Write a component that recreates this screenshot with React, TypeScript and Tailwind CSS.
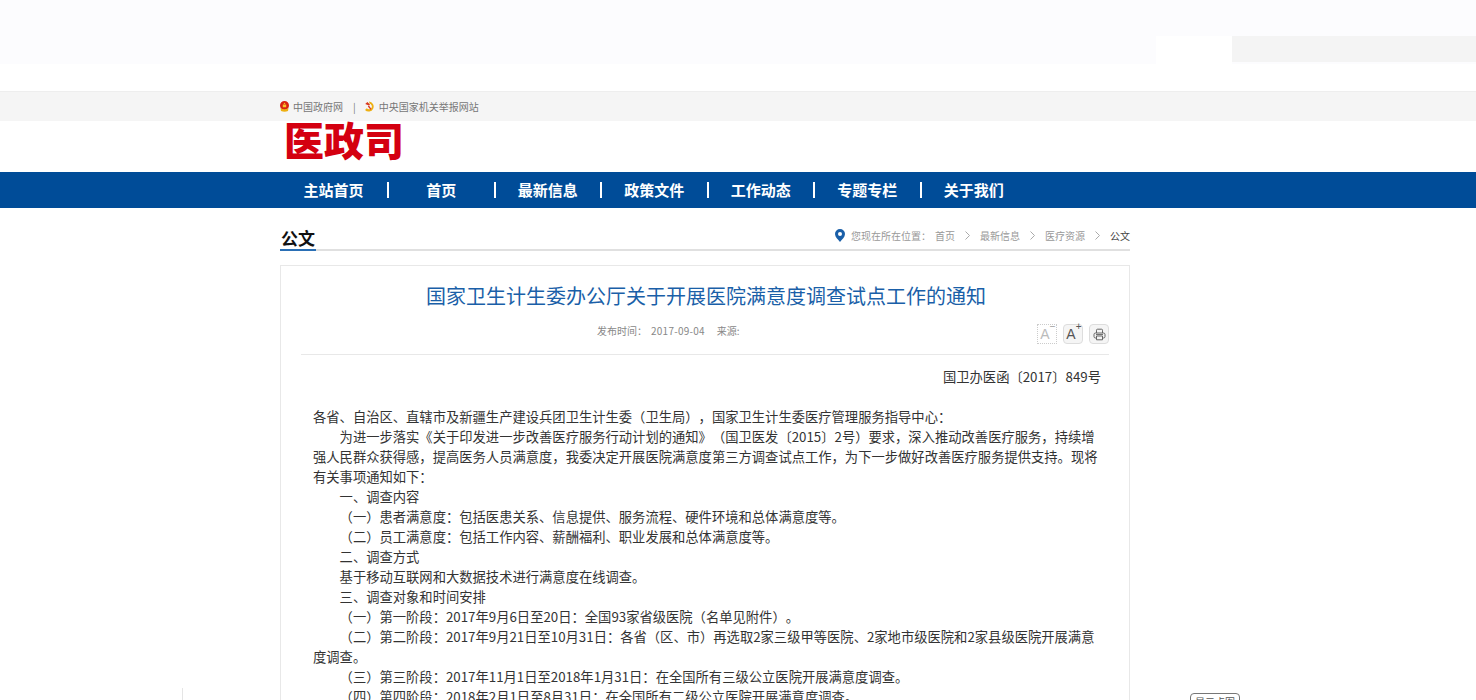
const navItems = ["主站首页", "首页", "最新信息", "政策文件", "工作动态", "专题专栏", "关于我们"];
const crumbs = ["首页", "最新信息", "医疗资源"];

const Emblem = () => (
  <svg width="9" height="11" viewBox="0 0 9 11">
    <path d="M4.5 0 A4.5 4.5 0 0 1 9 4.5 A4.5 4.5 0 0 1 0 4.5 A4.5 4.5 0 0 1 4.5 0 Z" fill="#d9230f" />
    <path d="M0.5 7 Q4.5 9.5 8.5 7 L8 10 Q4.5 11.5 1 10 Z" fill="#eeb012" />
    <path d="M4.5 1.4 L5.4 3 L3.6 3 Z M2.8 3.6 H6.2 V6.2 H2.8 Z" fill="#f6c62a" />
  </svg>
);

const PartyBadge = () => (
  <svg width="11" height="11" viewBox="0 0 11 11">
    <path d="M5 0.6 A5 5 0 1 1 1 9 L2.8 7.2 A2.8 2.8 0 1 0 5.6 2.8 Z" fill="#eeb012" />
    <path d="M1.2 3 L3.4 1 L6 3.6 L5 4.6 Z M5 4.6 L7.4 8 L6.6 8.8 L3.8 5.6 Z" fill="#d9381e" />
  </svg>
);

const PrintIcon = () => (
  <svg width="13" height="13" viewBox="0 0 13 13" fill="none" stroke="#666" strokeWidth="1">
    <path d="M3.5 5 V2.2 Q3.5 1.2 4.5 1.2 H8.5 Q9.5 1.2 9.5 2.2 V5" />
    <rect x="1" y="5" width="11" height="5" rx="1.5" />
    <path d="M3.5 8 H9.5 V11.8 H3.5 Z" fill="#f5f5f5" />
    <path d="M3 6.6 H10" />
  </svg>
);

const PinIcon = () => (
  <svg width="10" height="13" viewBox="0 0 10 13">
    <path d="M5 0 A5 5 0 0 1 10 5 C10 8 7 10.5 5 13 C3 10.5 0 8 0 5 A5 5 0 0 1 5 0 Z" fill="#1a5fa8" />
    <circle cx="5" cy="5" r="2" fill="#fff" />
  </svg>
);

function ChevronIcon() {
  return (
    <svg width="13" height="13" viewBox="0 0 13 13" fill="none" stroke="#aaa" strokeWidth="1">
      <path d="M4.5 2.5 L8.5 6.5 L4.5 10.5" />
    </svg>
  );
}

export default function App() {
  return (
    <div className="relative h-screen overflow-hidden bg-white font-['Noto_Sans_CJK_SC','Liberation_Sans',sans-serif] text-[#333] [text-spacing-trim:space-all]">
      <div className="flex h-16 items-end justify-end bg-[#fcfcfe]">
        <div className="h-7 w-19 bg-white" />
        <div className="mb-0.5 h-6.5 w-61 bg-[#f4f4f4]" />
      </div>

      <div className="mt-6.75 h-7.5 border-t border-[#eee] bg-[#f5f5f5]">
        <div className="ml-70 flex h-full w-[850px] items-center text-[10px] text-[#777]">
          <Emblem />
          <span className="ml-1">中国政府网</span>
          <span className="mr-2 ml-2.5">|</span>
          <PartyBadge />
          <span className="ml-1">中央国家机关举报网站</span>
        </div>
      </div>

      <div className="h-[51px]">
        <div className="ml-70 w-[850px] pt-0.5 pl-1 text-[40px] leading-8 font-black text-[#d40010]">
          医政司
        </div>
      </div>

      <nav className="h-9 bg-[#004c98]">
        <div className="ml-70 flex h-full w-[746px] items-center">
          {navItems.map((item, i) => (
            <div
              key={item}
              className={`flex h-4 items-center justify-center text-[15px] font-bold text-white ${
                i === 0 ? "w-27.25 shrink-0" : "flex-1"
              } ${i < navItems.length - 1 ? "border-r-2 border-white" : ""}`}
            >
              {item}
            </div>
          ))}
        </div>
      </nav>

      <main className="ml-70 w-[850px]">
        <div className="flex h-[43px] items-end justify-between border-b-2 border-[#e0e0e0] pt-4">
          <h1 className="-mb-0.5 border-b-2 border-[#2a6fb5] px-px pb-px text-[17px] leading-5 font-bold text-[#111]">
            公文
          </h1>
          <div className="mb-1.5 flex items-center gap-1.5 text-[10px] text-[#999]">
            <PinIcon />
            <span className="-mr-0.5">您现在所在位置：</span>
            {crumbs.map((c) => (
              <span key={c} className="flex items-center gap-1.5">
                {c}
                <ChevronIcon />
              </span>
            ))}
            <span className="text-[#444]">公文</span>
          </div>
        </div>

        <article className="mt-3.5 border border-[#e8e8e8] pt-4">
          <h2 className="pl-0.5 text-center text-xl text-[#1a5fa8]">
            国家卫生计生委办公厅关于开展医院满意度调查试点工作的通知
          </h2>

          <div className="mx-5 mt-3.5 flex items-center border-b border-[#e8e8e8] pb-2.5 pl-74">
            <div className="-mt-2 flex gap-3 text-[10px] text-[#888]">
              <span>
                发布时间：<span className="ml-1 tracking-wide">2017-09-04</span>
              </span>
              <span>来源:</span>
            </div>
            <div className="ml-auto flex gap-1.5 font-['Liberation_Sans',sans-serif] text-sm font-light">
              <span className="flex size-5 items-center justify-center border border-dotted border-[#ccc] text-[#bbb]">
                <span className="relative -ml-1">
                  A<span className="absolute -top-1 -right-1.5 text-[10px] text-[#999]">−</span>
                </span>
              </span>
              <span className="flex size-5 items-center justify-center rounded-sm border border-[#ddd] bg-[#f5f5f5] text-[#555]">
                <span className="relative -ml-1">
                  A<span className="absolute -top-1 -right-1.5 text-[10px]">+</span>
                </span>
              </span>
              <span className="flex size-5 items-center justify-center rounded-sm border border-[#ddd] bg-[#f5f5f5]">
                <PrintIcon />
              </span>
            </div>
          </div>

          <div className="mt-3 pr-7 pl-8 text-[13.3px] leading-5">
            <p className="text-right">国卫办医函〔2017〕849号</p>
            <p className="mt-5">各省、自治区、直辖市及新疆生产建设兵团卫生计生委（卫生局），国家卫生计生委医疗管理服务指导中心：</p>
            <p className="indent-[2em]">为进一步落实《关于印发进一步改善医疗服务行动计划的通知》（国卫医发〔2015〕2号）要求，深入推动改善医疗服务，持续增强人民群众获得感，提高医务人员满意度，我委决定开展医院满意度第三方调查试点工作，为下一步做好改善医疗服务提供支持。现将有关事项通知如下：</p>
            <p className="indent-[2em]">一、调查内容</p>
            <p className="indent-[2em]">（一）患者满意度：包括医患关系、信息提供、服务流程、硬件环境和总体满意度等。</p>
            <p className="indent-[2em]">（二）员工满意度：包括工作内容、薪酬福利、职业发展和总体满意度等。</p>
            <p className="indent-[2em]">二、调查方式</p>
            <p className="indent-[2em]">基于移动互联网和大数据技术进行满意度在线调查。</p>
            <p className="indent-[2em]">三、调查对象和时间安排</p>
            <p className="indent-[2em]">（一）第一阶段：2017年9月6日至20日：全国93家省级医院（名单见附件）。</p>
            <p className="indent-[2em]">（二）第二阶段：2017年9月21日至10月31日：各省（区、市）再选取2家三级甲等医院、2家地市级医院和2家县级医院开展满意度调查。</p>
            <p className="indent-[2em]">（三）第三阶段：2017年11月1日至2018年1月31日：在全国所有三级公立医院开展满意度调查。</p>
            <p className="indent-[2em]">（四）第四阶段：2018年2月1日至8月31日：在全国所有二级公立医院开展满意度调查。</p>
          </div>
        </article>
      </main>

      <div className="absolute bottom-0 left-[182px] h-3 w-px bg-[#e5e5e5]" />
      <div className="absolute top-[693px] left-[1190px] h-5 w-[50px] rounded-sm border border-[#777] text-center text-[10px] text-[#555]">
        显示点图
      </div>
    </div>
  );
}
